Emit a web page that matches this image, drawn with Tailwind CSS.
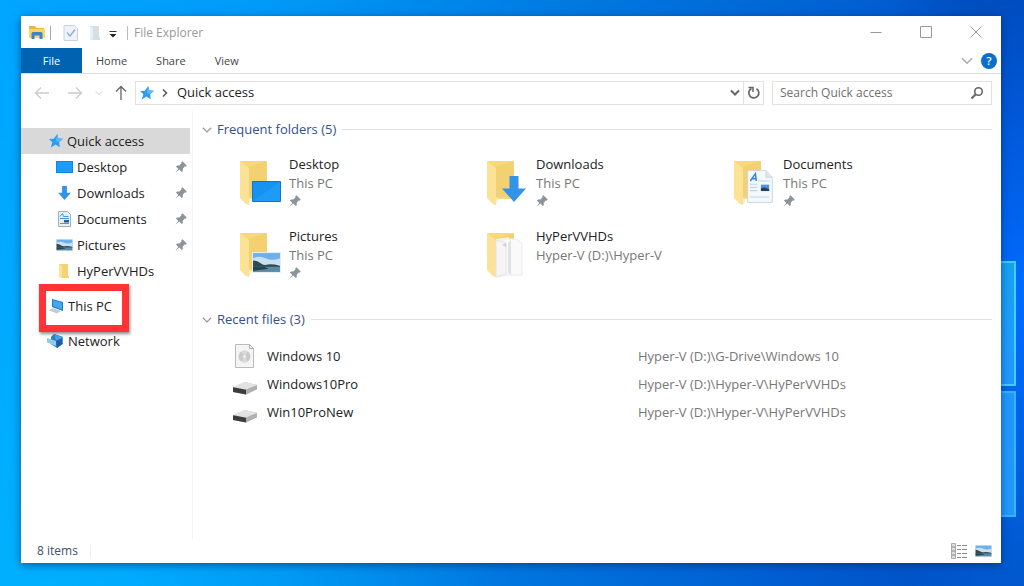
<!DOCTYPE html>
<html lang="en">
  <head>
    <meta charset="UTF-8" />
    <meta name="viewport" content="width=device-width, initial-scale=1.0" />
    <title>File Explorer</title>
    <script src="https://cdn.jsdelivr.net/npm/@tailwindcss/browser@4"></script>
  </head>

  <body class="relative flex min-h-screen overflow-x-hidden bg-[linear-gradient(100deg,#00a6ff_0%,#009cfa_22%,#0078e0_52%,#005cd0_80%,#004cc0_100%)] pt-4 pr-[23px] pb-[23px] pl-[21px] font-['Open_Sans','Noto_Sans',sans-serif] text-[13px] leading-[19px] text-[#222]">
    <svg class="hidden">
      <symbol id="star" viewBox="0 0 16 16">
        <path d="M9.500 0l1.200 5.200 5.300.3-4.300 3.500.5 6-4.700-3-5.500 3.500 1.800-6L0 5.800l5.500-.3z" fill="#2b9cf0" />
        <path d="M9.500 0l1.200 5.200 5.300.3-4.300 3.500-4-1z" fill="#5bb8f8" />
      </symbol>
      <symbol id="pin" viewBox="0 0 12 12">
        <path d="M7.500.3l4.200 4.200-1.100 1.200-.9-.2-2 2.200.2 2.300-1.100 1.100-2.400-2.500L.4 11.800 3.300 8 .9 5.500 2 4.400l2.300.2 2.100-2-.2-1z" fill="#8c949b" />
      </symbol>
      <symbol id="down" viewBox="0 0 24 26">
        <path d="M7.500 0h9v12.500H24L12 26 0 12.500h7.500z" fill="#3393e6" />
      </symbol>
      <symbol id="chevron" viewBox="0 0 12 8">
        <path d="M1 1.300l5 5 5-5" fill="none" stroke="currentColor" stroke-width="1.500" />
      </symbol>
      <symbol id="photo" viewBox="0 0 28 20" preserveAspectRatio="none">
        <path d="M0 0h28v20H0z" fill="#e4eef5" />
        <path d="M1 1h26v10H1z" fill="#6fb0ec" />
        <path d="M1 6q6-3 12 0t14 0v6H1z" fill="#c8e0f4" />
        <path d="M1 8q4 0 7 2.500t7 1.500 12 1v2H1z" fill="#2d4a50" />
        <path d="M1 14h26v5H1z" fill="#5a8ba6" />
        <path d="M1 14h11l4 2-15 2z" fill="#27434d" />
      </symbol>
      <symbol id="folder" viewBox="0 0 44 48">
        <path d="M1 2h27v38H9z" fill="#f7d87c" />
        <path d="M9 8l19-6v36H9z" fill="#f3d071" />
        <path d="M1 2l9 7v37l-3-1-6-6z" fill="#fbe294" />
        <path d="M10 39l3 1-3 6z" fill="#f7efd5" />
      </symbol>
      <symbol id="drive" viewBox="0 0 24 14">
        <path d="M0 6.500L12 1l12 3v4l-11 5.500L0 11z" fill="#bdbdbd" />
        <path d="M0 6L12 .8 24 4l-11 4.500z" fill="#e2e2e2" />
        <path d="M0 6.200l13 2.600v4.700L0 11z" fill="#3c3c3c" />
        <path d="M13 8.800L24 4.200v4l-11 5.300z" fill="#b0b0b0" />
      </symbol>
      <symbol id="document" viewBox="0 0 28 36">
        <path d="M.5.5h20L27.500 8v27.500H.500z" fill="#f4f8fb" stroke="#ccd5dc" />
        <path d="M20.500.5V8h7" fill="#dfe6ea" stroke="#ccd5dc" />
        <path d="M3.500 12L9 4l1 8M5 9.500h5" fill="none" stroke="#2f86dc" stroke-width="1.600" />
        <path d="M12 12h13M3 15.500h8M3 19h8M3 22.500h8M3 29.500h21" stroke="#b9d6ee" stroke-width="1.200" />
        <path d="M15 16h9v7h-9z" fill="#4d94da" />
        <path d="M15 20q4-2 9 1v2h-9z" fill="#263f66" />
      </symbol>
    </svg>

    <!-- wallpaper glow and window logo panes -->
    <div class="absolute inset-y-0 left-0 w-1/2 bg-linear-to-b from-transparent to-[#00b7ff]/70 mask-r-from-0%"></div>
    <div class="absolute inset-y-0 right-0 w-32 bg-linear-to-b from-[#0048b8]/60 via-[#006cff] to-[#0058cc] mask-l-from-40%"></div>
    <div class="absolute top-[261px] right-2 h-[125px] w-20 border-2 border-[#3fd0ff] bg-linear-to-b from-[#16a2f4] to-[#2298ff]"></div>
    <div class="absolute top-[391px] right-2 h-[126px] w-20 border-2 border-[#30b8ff] bg-[#2298ff]"></div>

    <div class="relative flex min-w-0 flex-1 flex-col bg-white shadow-[0_2px_8px_rgba(0,30,80,0.55)]">
      <header class="flex h-8 items-center">
        <div class="flex items-center pt-0.5">
          <svg class="ml-[7px] h-4 w-[18px]" viewBox="0 0 18 16">
            <path d="M1 1h6l1.500 2H16v10H1z" fill="#e9b83e" />
            <path d="M1 4h16v9H1z" fill="#f8d66d" />
            <path d="M3.500 14V8.500q0-1.500 1.500-1.500h8q1.500 0 1.500 1.500V14h-3v-3.500h-5V14z" fill="#3c83cc" />
          </svg>
          <span class="ml-1 h-3.5 w-px bg-[#aaa]"></span>
          <button class="ml-3" aria-label="Properties">
            <svg class="h-4 w-4" viewBox="0 0 16 16">
              <path d="M1 .5h10.500l3 3v12H1z" fill="#edf3f8" stroke="#c9d2db" />
              <path d="M4 7.500l3 3.500 5-6.500" fill="none" stroke="#9db3ca" stroke-width="1.600" />
            </svg>
          </button>
          <button class="ml-2.5" aria-label="New folder">
            <svg class="h-4 w-3" viewBox="0 0 12 16">
              <path d="M1 1h9v11l1 1v2H2l-1-1z" fill="#d5e0e6" />
              <path d="M1 1l3 2v12l-3-1z" fill="#e9eff3" />
            </svg>
          </button>
          <button class="ml-2" aria-label="Customize Quick Access Toolbar">
            <svg class="h-3 w-2" viewBox="0 0 8 12">
              <path d="M.5 4.500h7" stroke="#333" />
              <path d="M.5 7h7L4 10.500z" fill="#222" />
            </svg>
          </button>
          <span class="ml-2.5 h-3.5 w-px bg-[#bbb]"></span>
          <h1 class="ml-1.5 text-xs text-[#999]">File Explorer</h1>
        </div>
        <div class="ml-auto flex h-full text-[#999]">
          <button class="flex w-[50px] items-center justify-center" aria-label="Minimize">
            <svg class="h-3 w-3" viewBox="0 0 12 12"><path d="M.5 6.500h11" stroke="currentColor" /></svg>
          </button>
          <button class="flex w-[50px] items-center justify-center" aria-label="Maximize">
            <svg class="h-3 w-3" viewBox="0 0 12 12"><path d="M.5.500h11v11H.500z" fill="none" stroke="currentColor" /></svg>
          </button>
          <button class="flex w-[50px] items-center justify-center" aria-label="Close">
            <svg class="h-3 w-3" viewBox="0 0 12 12"><path d="M.5.5l11 11M11.500.5l-11 11" stroke="currentColor" /></svg>
          </button>
        </div>
      </header>

      <nav class="flex h-[26px] items-center border-b border-[#ddd] text-[11px] text-[#444]">
        <button class="h-full w-[61px] bg-[#0063b1] text-white">File</button>
        <div class="ml-3.5 flex gap-[29px]">
          <button>Home</button>
          <button>Share</button>
          <button>View</button>
        </div>
        <button class="ml-auto text-[#aaa]" aria-label="Expand the Ribbon">
          <svg class="h-2 w-3"><use href="#chevron" /></svg>
        </button>
        <button class="mr-1 ml-2 flex h-4 w-4 items-center justify-center rounded-full bg-[#0a6fcd] text-[11px] font-semibold text-white" aria-label="Help">?</button>
      </nav>

      <div class="flex h-[37px] items-center pr-[9px] pl-[13px]">
        <button class="text-[#ccc]" aria-label="Back">
          <svg class="h-3.5 w-4" viewBox="0 0 16 14"><path d="M15 7H1.500M7 1.500L1.500 7 7 12.500" fill="none" stroke="currentColor" stroke-width="1.300" /></svg>
        </button>
        <button class="ml-[17px] text-[#ccc]" aria-label="Forward">
          <svg class="h-3.5 w-4" viewBox="0 0 16 14"><path d="M1 7h13.500M9 1.500L14.500 7 9 12.500" fill="none" stroke="currentColor" stroke-width="1.300" /></svg>
        </button>
        <button class="ml-3 text-[#ccc]" aria-label="Recent locations">
          <svg class="h-1.5 w-2"><use href="#chevron" /></svg>
        </button>
        <button class="ml-3 text-[#666]" aria-label="Up">
          <svg class="h-4 w-3" viewBox="0 0 12 16"><path d="M6 15V1.500M1 6.500l5-5 5 5" fill="none" stroke="currentColor" stroke-width="1.300" /></svg>
        </button>
        <div class="ml-2 flex h-6 flex-1 items-center border border-[#e2e2e2]">
          <svg class="ml-1 h-3.5 w-3.5"><use href="#star" /></svg>
          <svg class="ml-2 h-2 w-1.5" viewBox="0 0 6 8"><path d="M1 .5L4.500 4 1 7.500" fill="none" stroke="#555" stroke-width="1.500" /></svg>
          <button class="ml-[9px]">Quick access</button>
          <button class="ml-auto text-[#666]" aria-label="Previous locations">
            <svg class="h-2 w-3" viewBox="0 0 12 8"><path d="M2 1.500l4 4 4-4" fill="none" stroke="currentColor" stroke-width="2" /></svg>
          </button>
          <button class="ml-0.5 flex h-full w-5 items-center justify-center border-l border-[#e2e2e2] text-[#666]" aria-label="Refresh">
            <svg class="h-3.5 w-3.5" viewBox="0 0 14 14">
              <path d="M4.500 2.500A5 5 0 1 0 9.500 2.700" fill="none" stroke="currentColor" stroke-width="1.700" />
              <path d="M1.500 1.500h4.500v4.500" fill="none" stroke="currentColor" stroke-width="1.500" />
            </svg>
          </button>
        </div>
        <label class="ml-2 flex h-6 w-[220px] items-center border border-[#e2e2e2] pr-[7px] pl-[7px]">
          <input class="w-full min-w-0 text-[12px] outline-none placeholder:text-[#707070]" type="text" placeholder="Search Quick access" aria-label="Search Quick access" />
          <svg class="h-3.5 w-3.5 shrink-0" viewBox="0 0 14 14">
            <circle cx="8.500" cy="5.500" r="3.800" fill="none" stroke="#666" stroke-width="1.600" />
            <path d="M5.800 8.200L1.500 12.500" stroke="#666" stroke-width="2" />
          </svg>
        </label>
      </div>

      <div class="flex flex-1">
        <aside class="w-[172px] shrink-0 border-r border-[#f4f4f4] pt-[17px] pr-0.5">
          <a href="#" class="flex h-[26px] items-center gap-1 bg-[#d9d9d9] pl-7">
            <svg class="h-3.5 w-3.5"><use href="#star" /></svg>
            Quick access
          </a>
          <a href="#" class="flex h-[26px] items-center pr-[3px] pl-[35px]">
            <svg class="mr-1 h-3 w-[17px]" viewBox="0 0 17 12"><path d="M0 0h17v12H0z" fill="#0f86e4" /><path d="M1 1h15v10H1z" fill="#1d9bf6" /></svg>
            Desktop
            <svg class="ml-auto h-3 w-3"><use href="#pin" /></svg>
          </a>
          <a href="#" class="flex h-[26px] items-center pr-[3px] pl-[35px]">
            <svg class="mr-1 h-3.5 w-[17px]"><use href="#down" /></svg>
            Downloads
            <svg class="ml-auto h-3 w-3"><use href="#pin" /></svg>
          </a>
          <a href="#" class="flex h-[26px] items-center pr-[3px] pl-[35px]">
            <svg class="mr-1 h-4 w-[17px]" viewBox="0 0 17 16">
              <path d="M2.500.5h9l3 3v12h-12z" fill="#e6eff6" stroke="#a3afb9" />
              <path d="M4 5.500l2.500-3 1 3h5M4 7.500h9M4 12.500h9" fill="none" stroke="#4599e0" />
              <path d="M8 9h5v2.500H8z" fill="#2b5d91" />
            </svg>
            Documents
            <svg class="ml-auto h-3 w-3"><use href="#pin" /></svg>
          </a>
          <a href="#" class="flex h-[26px] items-center pr-[3px] pl-[35px]">
            <svg class="mr-1 h-3 w-[17px]"><use href="#photo" /></svg>
            Pictures
            <svg class="ml-auto h-3 w-3"><use href="#pin" /></svg>
          </a>
          <a href="#" class="flex h-[26px] items-center pr-[3px] pl-[35px]">
            <svg class="mr-1 h-4 w-[17px]" viewBox="0 0 17 16"><path d="M3 1h9v11.500l1 .5v2H5l-2-1.500z" fill="#f5d373" /><path d="M3 1l3 2v12.500l-3-2z" fill="#fde196" /></svg>
            HyPerVVHDs
          </a>
          <div class="relative my-[9px]">
            <a href="#" class="flex h-[26px] items-center gap-1 pl-7">
              <svg class="h-4 w-[15px]" viewBox="0 0 15 16">
                <path d="M3 1l11 3v9L3 9z" fill="#1c7ccc" />
                <path d="M4 2.300l9 2.500v6.700L4 8.300z" fill="#42a8ee" />
                <path d="M0 12.500l4-2.500 8 3-4 2.500z" fill="#c4ccd3" />
              </svg>
              This PC
            </a>
            <div class="absolute -top-[9px] left-[18px] h-12 w-[90px] border-[7px] border-[#ff3236] shadow-[1px_2px_3px_rgba(0,0,0,0.45)]"></div>
          </div>
          <a href="#" class="flex h-[26px] items-center gap-1 pl-7">
            <svg class="-ml-0.5 h-4 w-[17px]" viewBox="0 0 17 16">
              <path d="M7 1l9 3v7l-6 4-6-4V4z" fill="#2a7fc8" />
              <path d="M7 1l9 3v6l-7-3z" fill="#4aa3e4" />
              <path d="M0 5l9 3v5L0 9.500z" fill="#8fcaf0" />
              <path d="M9 8l6-3v6l-5 4z" fill="#1f5f9f" />
            </svg>
            Network
          </a>
        </aside>

        <main class="min-w-0 flex-1 pt-[9px] pr-[9px] pl-[9px]">
          <section>
            <h2 class="flex items-center text-[#33508f]">
              <svg class="mr-[5px] h-2 w-2.5 text-[#999]"><use href="#chevron" /></svg>
              Frequent folders (5)
              <span class="ml-1.5 h-px flex-1 bg-[#e2e2e2]"></span>
            </h2>
            <div class="grid grid-cols-[repeat(auto-fill,247px)] gap-y-[18px] pt-4 pl-[37px]">
              <a href="#" class="flex h-[54px]">
                <svg class="mt-1 mr-[6px] h-12 w-11" viewBox="0 0 44 48">
                  <use href="#folder" width="44" height="48" />
                  <path d="M13.500 22.500h28v20h-28z" fill="#1593f3" stroke="#0c76ce" />
                  <path d="M14 42l27-19v19z" fill="#1f9af6" />
                </svg>
                <div>
                  <div>Desktop</div>
                  <div class="text-[#777]">This PC</div>
                  <svg class="mt-0.5 h-3 w-3"><use href="#pin" /></svg>
                </div>
              </a>
              <a href="#" class="flex h-[54px]">
                <svg class="mt-1 mr-[6px] h-12 w-11" viewBox="0 0 44 48">
                  <use href="#folder" width="44" height="48" />
                  <use href="#down" x="16" y="17" width="24" height="26" />
                </svg>
                <div>
                  <div>Downloads</div>
                  <div class="text-[#777]">This PC</div>
                  <svg class="mt-0.5 h-3 w-3"><use href="#pin" /></svg>
                </div>
              </a>
              <a href="#" class="flex h-[54px]">
                <svg class="mt-1 mr-[6px] h-12 w-11" viewBox="0 0 44 48">
                  <use href="#folder" width="44" height="48" />
                  <use href="#document" x="14" y="11" width="26" height="33" />
                </svg>
                <div>
                  <div>Documents</div>
                  <div class="text-[#777]">This PC</div>
                  <svg class="mt-0.5 h-3 w-3"><use href="#pin" /></svg>
                </div>
              </a>
              <a href="#" class="flex h-[54px]">
                <svg class="mt-1 mr-[6px] h-12 w-11" viewBox="0 0 44 48">
                  <use href="#folder" width="44" height="48" />
                  <use href="#photo" x="13" y="21" width="29" height="21" />
                </svg>
                <div>
                  <div>Pictures</div>
                  <div class="text-[#777]">This PC</div>
                  <svg class="mt-0.5 h-3 w-3"><use href="#pin" /></svg>
                </div>
              </a>
              <a href="#" class="flex h-[54px]">
                <svg class="mt-1 mr-[6px] h-12 w-11" viewBox="0 0 44 48">
                  <use href="#folder" width="44" height="48" />
                  <path d="M10 8l13-2v38l-13 3z" fill="#f1f1f1" />
                  <path d="M17 8h13l6 4v32H17z" fill="#fafafa" stroke="#ececec" />
                  <path d="M10 9l10 3v31l-10 3z" fill="#f5f5f5" stroke="#e4e4e4" />
                  <path d="M25 9v35l-3-2V12z" fill="#e2e2e2" />
                  <path d="M16 14l4 2v-4z" fill="#d0d0d0" />
                </svg>
                <div>
                  <div>HyPerVVHDs</div>
                  <div class="text-[#777]">Hyper-V (D:)\Hyper-V</div>
                </div>
              </a>
            </div>
          </section>

          <section class="mt-[29px]">
            <h2 class="flex items-center text-[#33508f]">
              <svg class="mr-[5px] h-2 w-2.5 text-[#999]"><use href="#chevron" /></svg>
              Recent files (3)
              <span class="ml-1.5 h-px flex-1 bg-[#e2e2e2]"></span>
            </h2>
            <table class="mt-[13px] ml-[31px]">
              <tbody>
                <tr class="h-7">
                  <td class="w-[34px]">
                    <svg class="h-6 w-6" viewBox="0 0 24 24">
                      <path d="M2.500.5h14l4 4v19h-18z" fill="#f5f5f5" stroke="#bbb" />
                      <path d="M16.500.5v4h4" fill="none" stroke="#aaa" />
                      <circle cx="11.500" cy="12.500" r="6" fill="#cacaca" />
                      <path d="M11.500 12.500l-3-5a6 6 0 0 1 6 0zM11.500 12.500l3 5a6 6 0 0 1-6 0z" fill="#dadada" />
                      <circle cx="11.500" cy="12.500" r="1.500" fill="#f0f0f0" />
                    </svg>
                  </td>
                  <td class="w-[371px]">Windows 10</td>
                  <td class="text-[#777]">Hyper-V (D:)\G-Drive\Windows 10</td>
                </tr>
                <tr class="h-7">
                  <td><svg class="mt-2 h-3.5 w-6"><use href="#drive" /></svg></td>
                  <td>Windows10Pro</td>
                  <td class="text-[#777]">Hyper-V (D:)\Hyper-V\HyPerVVHDs</td>
                </tr>
                <tr class="h-7">
                  <td><svg class="mt-2 h-3.5 w-6"><use href="#drive" /></svg></td>
                  <td>Win10ProNew</td>
                  <td class="text-[#777]">Hyper-V (D:)\Hyper-V\HyPerVVHDs</td>
                </tr>
              </tbody>
            </table>
          </section>
        </main>
      </div>

      <footer class="flex h-6 items-center pr-[9px] pl-4 text-xs text-[#3b5068]">
        8 items
        <span class="ml-3 h-3.5 w-px bg-[#eee]"></span>
        <button class="ml-auto" aria-label="Details view">
          <svg class="h-4 w-4" viewBox="0 0 16 16">
            <path d="M.5.5h4v15h-4z" fill="#ddd" stroke="#aaa" />
            <path d="M1 4h3M1 8h3M1 12h3" stroke="#888" />
            <path d="M6 2.500h4M11 2.500h5M6 6.500h4M11 6.500h5M6 10.500h4M11 10.500h5M6 14.500h4M11 14.500h5" stroke="#888" />
          </svg>
        </button>
        <button class="ml-2" aria-label="Large thumbnails view">
          <svg class="h-3 w-[17px]"><use href="#photo" /></svg>
        </button>
      </footer>
    </div>
  </body>
</html>
